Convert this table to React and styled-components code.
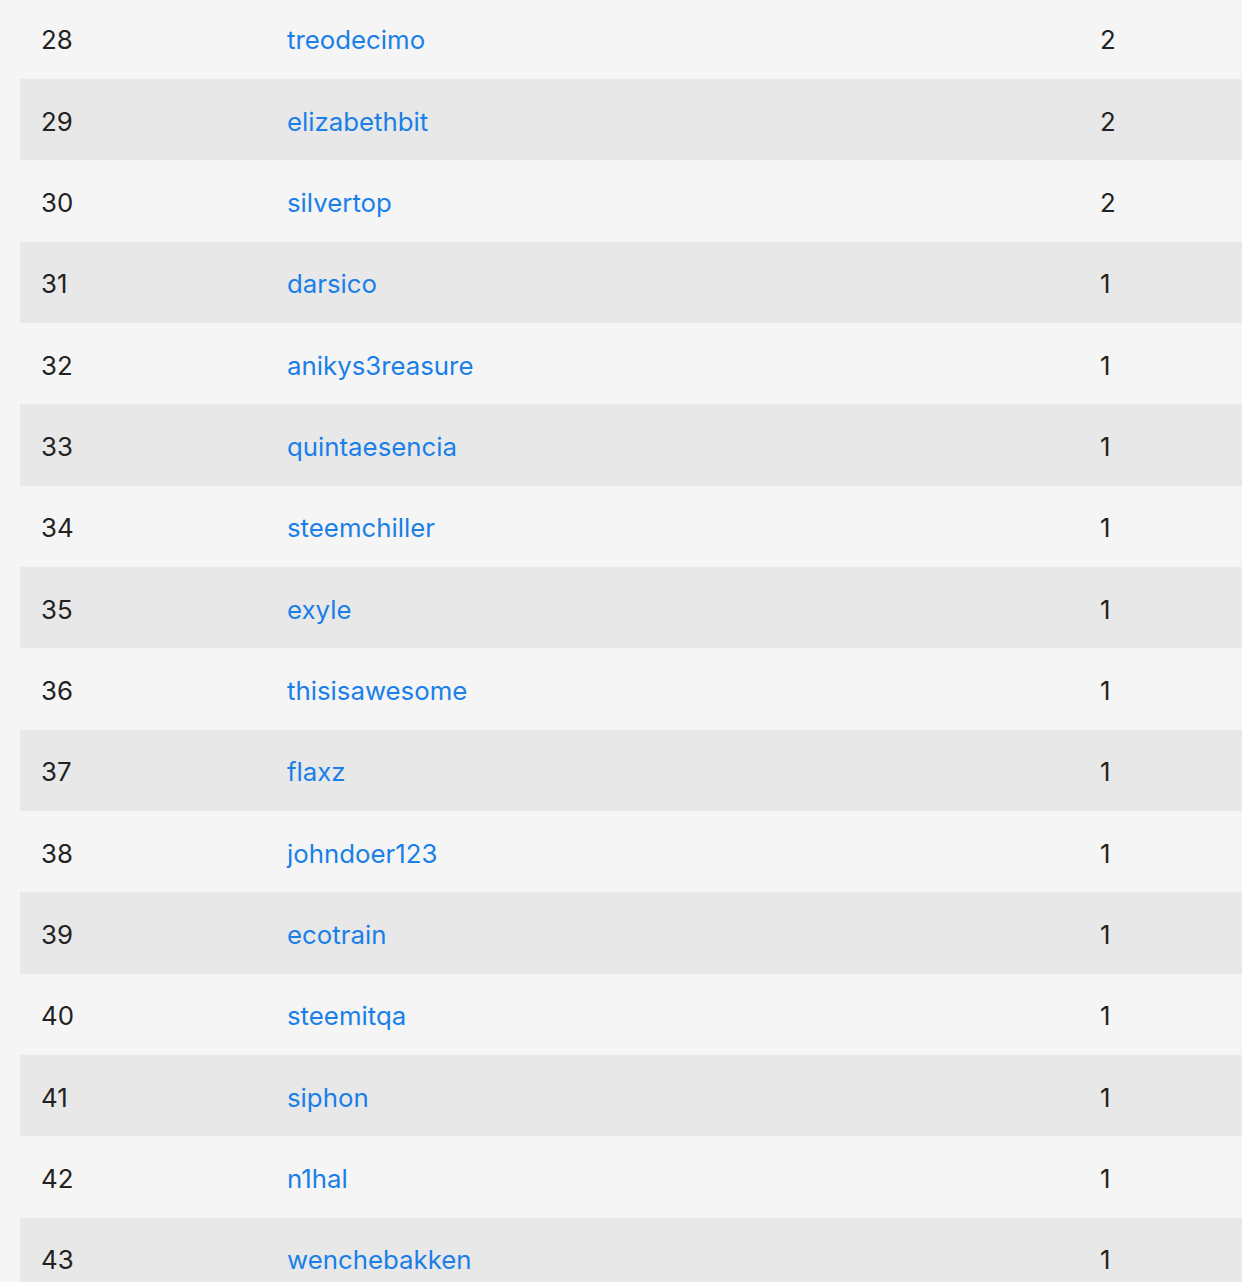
import React from 'react'
import styled, { createGlobalStyle } from 'styled-components'

const GlobalStyle = createGlobalStyle`
    html, body {
        margin: 0;
        padding: 0;
        background: #f5f5f5;
        overflow: hidden;
    }
    body {
        font-family: Inter, 'Noto Sans', 'Liberation Sans', sans-serif;
    }
`

const Page = styled.div`
    width: 1242px;
    height: 1282px;
    overflow: hidden;
    padding-left: 20px;
    box-sizing: border-box;
`

const Table = styled.div`
    width: 1300px;
    margin-top: -2.33px;
`

const Row = styled.div`
    display: grid;
    grid-template-columns: 246px 813px 1fr;
    align-items: center;
    height: 81.33px;
    background: ${p => (p.striped ? '#e8e8e8' : '#f5f5f5')};
    font-size: 25.8px;
    color: #222;
`

const Cell = styled.div`
    padding-left: 21px;
    padding-top: 3px;
`

const UserLink = styled.a`
    color: #1a7fe8;
    text-decoration: none;
`

const users = [
    ['treodecimo', 2],
    ['elizabethbit', 2],
    ['silvertop', 2],
    ['darsico', 1],
    ['anikys3reasure', 1],
    ['quintaesencia', 1],
    ['steemchiller', 1],
    ['exyle', 1],
    ['thisisawesome', 1],
    ['flaxz', 1],
    ['johndoer123', 1],
    ['ecotrain', 1],
    ['steemitqa', 1],
    ['siphon', 1],
    ['n1hal', 1],
    ['wenchebakken', 1],
]

const App = () => {
    return (
        <Page>
            <GlobalStyle />
            <Table>
                {users.map(([name, count], i) => (
                    <Row key={name} striped={i % 2 === 1}>
                        <Cell>{28 + i}</Cell>
                        <Cell>
                            <UserLink href="#">{name}</UserLink>
                        </Cell>
                        <Cell>{count}</Cell>
                    </Row>
                ))}
            </Table>
        </Page>
    )
}

export default App
